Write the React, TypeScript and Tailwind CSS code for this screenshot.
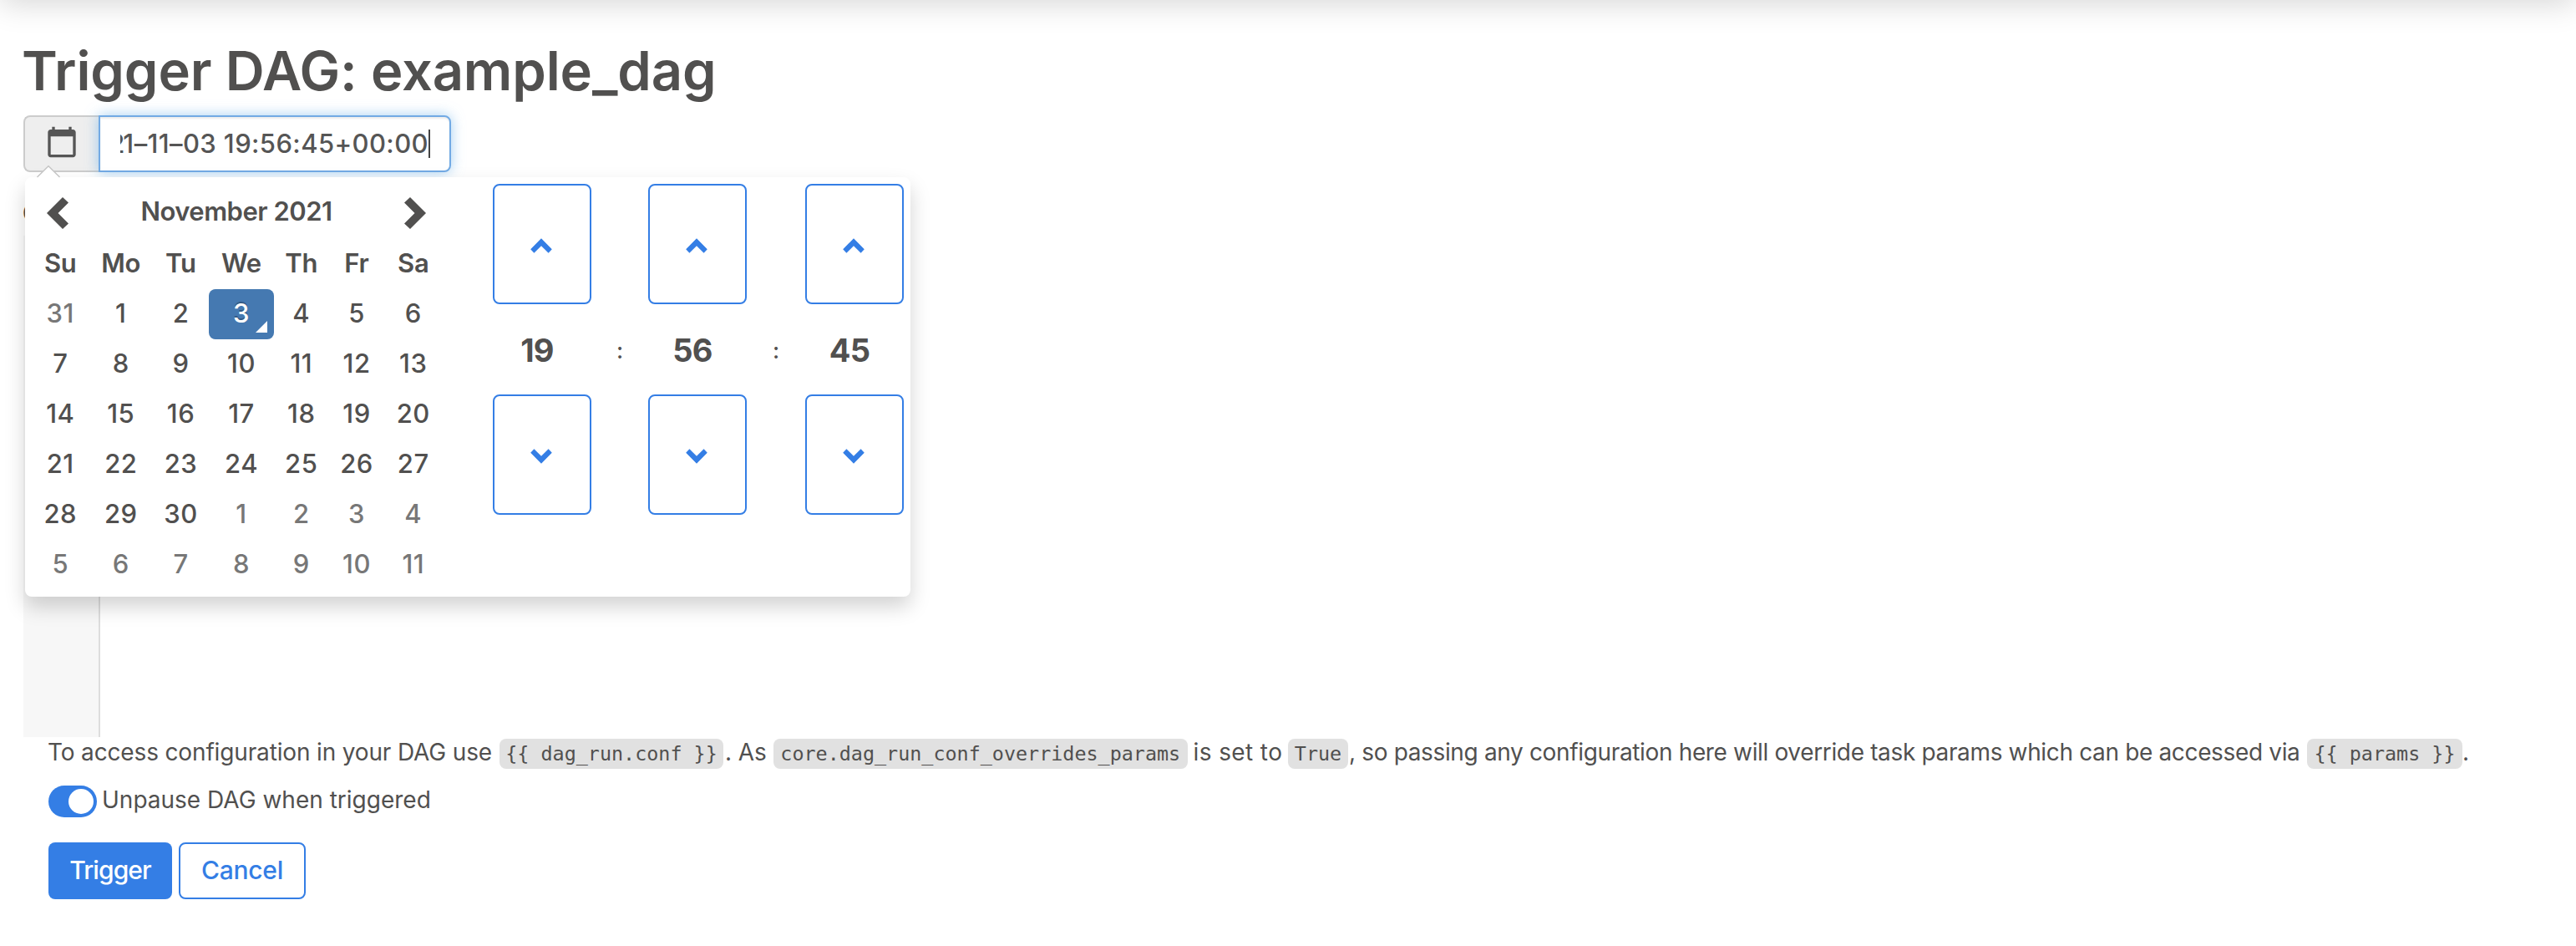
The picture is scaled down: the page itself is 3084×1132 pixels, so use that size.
import type { ReactNode } from "react";
import { MdCalendarToday } from "react-icons/md";

const weekdays = ["Su", "Mo", "Tu", "We", "Th", "Fr", "Sa"];

const weeks = [
  [31, 1, 2, 3, 4, 5, 6],
  [7, 8, 9, 10, 11, 12, 13],
  [14, 15, 16, 17, 18, 19, 20],
  [21, 22, 23, 24, 25, 26, 27],
  [28, 29, 30, 1, 2, 3, 4],
  [5, 6, 7, 8, 9, 10, 11],
];

function isOutsideMonth(week: number, day: number) {
  return (week === 0 && day > 20) || (week > 3 && day < 20);
}

function MonthChevron({ flipped = false }: { flipped?: boolean }) {
  return (
    <svg width="26" height="38" viewBox="0 0 26 38" className={flipped ? "rotate-180" : ""}>
      <path d="M19 0L26 6.5L13.5 19L26 31.5L19 38L0 19Z" fill="#51504f" />
    </svg>
  );
}

function StepButton({ down = false }: { down?: boolean }) {
  return (
    <button className="flex h-36 w-[118px] items-center justify-center rounded-lg border-2 border-[#347ee5] bg-white pt-1 pr-[3px]">
      <svg width="26" height="18" viewBox="0 0 26 18" className={down ? "rotate-180" : ""}>
        <path d="M13 0.3L25.8 13.3L21.6 17.7L13 9.3L4.4 17.7L0.2 13.3Z" fill="#347ee5" />
      </svg>
    </button>
  );
}

function TimeValue({ children }: { children: ReactNode }) {
  return (
    <div className="flex h-[108px] items-center justify-center pt-0.5 pr-3 text-[38px] font-bold tracking-[-0.8px]">
      {children}
    </div>
  );
}

function Colon() {
  return <div className="flex items-center justify-center pt-1 text-[27px]">:</div>;
}

function Code({ children, className }: { children: ReactNode; className: string }) {
  return (
    <code
      className={`shrink-0 rounded-lg bg-[#e1e1e1] text-center font-['DejaVu_Sans_Mono',monospace] text-[23.4px] leading-9 font-normal whitespace-pre ${className}`}
    >
      {children}
    </code>
  );
}

function DatePicker() {
  return (
    <div className="absolute top-[74px] left-0.5 z-10 flex h-[502px] w-[1060px] rounded-lg bg-white pt-2 pl-2 shadow-[0_12px_24px_rgba(0,0,0,0.175)]">
      <svg width="28" height="15" viewBox="0 0 28 15" className="absolute -top-3.5 left-3.5">
        <path d="M0 14L14 0L28 14V15H0Z" fill="#fff" />
        <path d="M0.5 14L14 0.7L27.5 14" fill="none" stroke="#c4c4c4" strokeWidth="1.4" />
      </svg>

      <div className="w-[491px]">
        <div className="flex h-[66px] items-center justify-between pr-[19px] pl-[18px]">
          <div className="pt-1">
            <MonthChevron />
          </div>
          <div className="text-[31px] font-semibold tracking-[-0.5px]">November 2021</div>
          <div className="pt-1">
            <MonthChevron flipped />
          </div>
        </div>
        <div className="grid grid-cols-[68.5px_76.5px_67px_78px_65.5px_67px_68.5px] text-[31px] tracking-[0.5px]">
          {weekdays.map((name) => (
            <div key={name} className="flex h-15 items-center justify-center pb-0.5 font-semibold tracking-[-0.2px]">
              {name}
            </div>
          ))}
          {weeks.map((days, week) =>
            days.map((day) => {
              if (week === 0 && day === 3) {
                return (
                  <div
                    key={`${week}-${day}`}
                    className="relative flex h-15 items-center justify-center rounded-lg bg-[#4579b1] pb-0.5 text-white [text-shadow:0_-2px_0_rgba(0,0,0,0.25)]"
                  >
                    {day}
                    <span className="absolute right-2 bottom-2 border-b-14 border-l-14 border-b-white border-l-transparent" />
                  </div>
                );
              }
              return (
                <div
                  key={`${week}-${day}`}
                  className={`flex h-15 items-center justify-center pb-0.5 ${isOutsideMonth(week, day) ? "text-[#777]" : ""}`}
                >
                  {day}
                </div>
              );
            }),
          )}
        </div>
      </div>

      <div className="ml-[61px] grid grid-cols-[118px_68px_118px_70px_118px] content-start">
        <StepButton />
        <div />
        <StepButton />
        <div />
        <StepButton />
        <TimeValue>19</TimeValue>
        <Colon />
        <TimeValue>56</TimeValue>
        <Colon />
        <TimeValue>45</TimeValue>
        <StepButton down />
        <div />
        <StepButton down />
        <div />
        <StepButton down />
      </div>
    </div>
  );
}

export default function App() {
  return (
    <div className="h-[1132px] w-[3084px] overflow-hidden bg-white font-['Inter',sans-serif] font-[450] text-[#51504f]">
      <header className="-mt-10 h-10 shadow-[0_4px_36px_rgba(0,0,0,0.17)]" />

      <main className="pt-10 pl-7">
        <h1 className="-ml-0.5 pt-px text-[65px] leading-[87px] font-semibold tracking-[-0.12px]">
          Trigger DAG: example_dag
        </h1>

        <div className="relative mt-2.5 flex h-17 w-[512px]">
          <div className="flex w-[90px] items-center justify-center rounded-l-lg border-2 border-r-0 border-[#ccc] bg-[#eee] pb-1 text-[#555]">
            <MdCalendarToday size={40} />
          </div>
          <div className="flex w-[422px] items-center rounded-r-lg border-2 border-[#72aae4] bg-white pl-6 text-[#555] shadow-[inset_0_2px_2px_rgba(0,0,0,0.075),0_0_16px_rgba(102,175,233,0.6)]">
            <div className="flex w-[369px] justify-end overflow-hidden pt-px text-[31px] tracking-[0.4px] whitespace-nowrap">
              <span>
                <span className="tracking-[-2px]">202</span>1–11–03 19:56:45+00:00
              </span>
            </div>
            <span className="h-[34px] w-0.5 bg-[#444]" />
          </div>
          <DatePicker />
        </div>

        <div className="mt-[31px] -ml-px h-9 text-[28px] leading-9 font-semibold">C</div>

        <div className="mt-[9px] h-[600px] w-[92px] border-r-2 border-[#ddd] bg-[#f7f7f7]" />

        <div className="pl-7">
          <p className="ml-px flex items-baseline text-[28px] leading-9 font-normal whitespace-pre">
            <span className="w-[541px] shrink-0 tracking-[-0.15px]">To access configuration in your DAG use</span>
            <Code className="w-[268px]">{"{{ dag_run.conf }}"}</Code>
            <span className="w-[60px] shrink-0 pl-0.5 tracking-[-0.1px]">. As</span>
            <Code className="w-[495.5px]">core.dag_run_conf_overrides_params</Code>
            <span className="w-[120.5px] shrink-0 pl-[7px] tracking-[0.4px]">is set to</span>
            <Code className="w-[72px]">True</Code>
            <span className="w-[1148px] shrink-0 pl-px tracking-[-0.35px]">
              , so passing any configuration here will override task params which can be accessed via
            </span>
            <Code className="w-[186px]">{"{{ params }}"}</Code>
            <span>.</span>
          </p>

          <label className="mt-5 flex h-[38px] items-center pl-0.5">
            <span className="flex h-[38px] w-[58px] items-center justify-end rounded-full bg-[#347ee5] pr-1">
              <span className="size-[30px] rounded-full bg-white" />
            </span>
            <span className="ml-1.5 pb-[5px] text-[28px] font-normal">Unpause DAG when triggered</span>
          </label>

          <div className="mt-[30px] flex gap-2 pl-0.5 text-[30px] font-medium">
            <button className="h-17 w-[148px] rounded-lg bg-[#347ee5] pb-0.5 tracking-[-0.9px] text-white">Trigger</button>
            <button className="h-17 w-[152px] rounded-lg border-2 border-[#347ee5] bg-white pb-0.5 tracking-[-0.3px] text-[#347ee5]">
              Cancel
            </button>
          </div>
        </div>
      </main>
    </div>
  );
}
